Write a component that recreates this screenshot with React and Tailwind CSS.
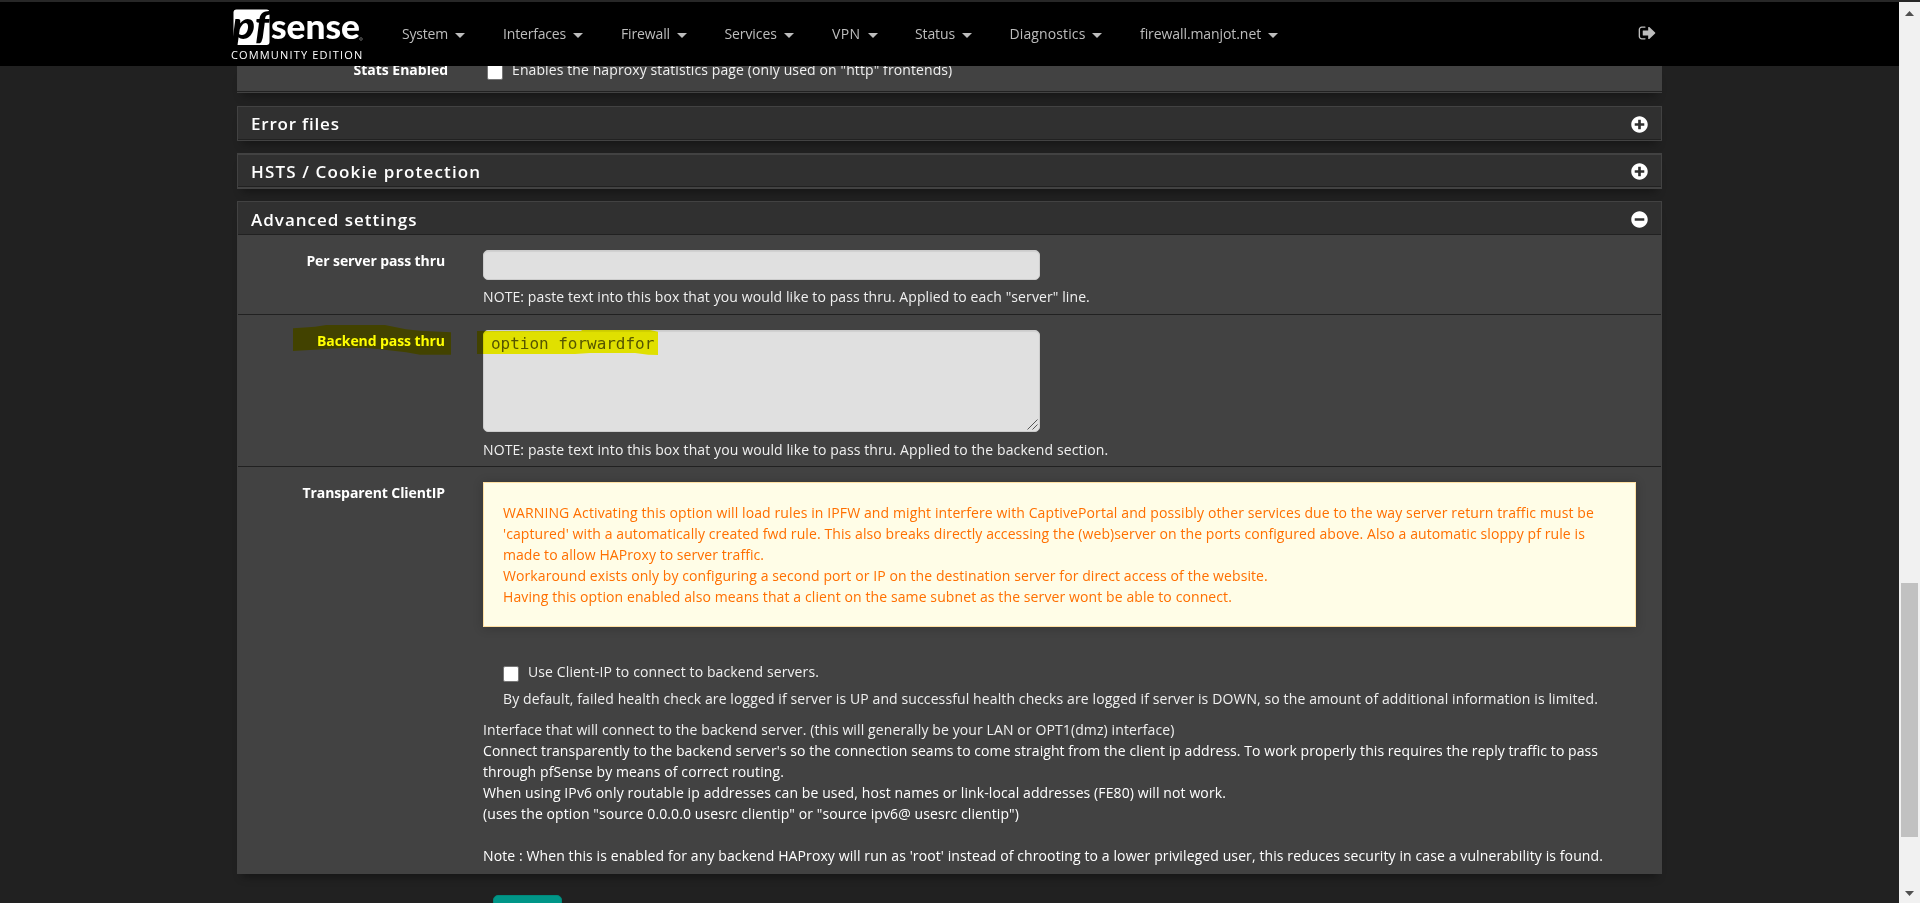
import { FaPlusCircle, FaMinusCircle } from "react-icons/fa";

const NAV = [
  { label: "System", width: "w-[101px]", tracking: "tracking-[-0.2px]" },
  { label: "Interfaces", width: "w-[118px]", tracking: "tracking-[-0.18px]" },
  { label: "Firewall", width: "w-[103.5px]", tracking: "tracking-[-0.13px]" },
  { label: "Services", width: "w-[107.5px]", tracking: "tracking-[-0.1px]" },
  { label: "VPN", width: "w-[83px]", tracking: "tracking-[0.4px]" },
  { label: "Status", width: "w-[94.5px]", tracking: "tracking-[-0.12px]" },
  { label: "Diagnostics", width: "w-[130.5px]", tracking: "tracking-[0.12px]" },
  { label: "firewall.manjot.net", width: "w-[145px]", tracking: "tracking-[-0.08px]" },
];

const WARNING = [
  {
    text: "WARNING Activating this option will load rules in IPFW and might interfere with CaptivePortal and possibly other services due to the way server return traffic must be",
    tracking: "tracking-[0.11px]",
  },
  {
    text: "'captured' with a automatically created fwd rule. This also breaks directly accessing the (web)server on the ports configured above. Also a automatic sloppy pf rule is",
    tracking: "tracking-[0.094px]",
  },
  { text: "made to allow HAProxy to server traffic.", tracking: "tracking-[0.06px]" },
  {
    text: "Workaround exists only by configuring a second port or IP on the destination server for direct access of the website.",
    tracking: "tracking-[0.095px]",
  },
  {
    text: "Having this option enabled also means that a client on the same subnet as the server wont be able to connect.",
    tracking: "tracking-[0.102px]",
  },
];

const HELP = [
  {
    text: "Interface that will connect to the backend server. (this will generally be your LAN or OPT1(dmz) interface)",
    tracking: "tracking-[0.109px]",
    color: "text-[#f0f0f0]",
  },
  {
    text: "Connect transparently to the backend server's so the connection seams to come straight from the client ip address. To work properly this requires the reply traffic to pass",
    tracking: "tracking-[0.061px]",
    color: "text-white",
  },
  { text: "through pfSense by means of correct routing.", tracking: "tracking-[0.112px]", color: "text-white" },
  {
    text: "When using IPv6 only routable ip addresses can be used, host names or link-local addresses (FE80) will not work.",
    tracking: "tracking-[0.104px]",
    color: "text-white",
  },
  {
    text: '(uses the option "source 0.0.0.0 usesrc clientip" or "source ipv6@ usesrc clientip")',
    tracking: "tracking-[0.093px]",
    color: "text-white",
  },
  { text: "\u00a0", tracking: "", color: "" },
  {
    text: "Note : When this is enabled for any backend HAProxy will run as 'root' instead of chrooting to a lower privileged user, this reduces security in case a vulnerability is found.",
    tracking: "tracking-[0.104px]",
    color: "text-white",
  },
];

const PANEL_SHADOW = "shadow-[0_8px_8px_-5px_rgba(0,0,0,0.35)]";

function Logo() {
  return (
    <div className="flex w-[134px] shrink-0 flex-col pt-[6px]">
      <svg width="134" height="38" viewBox="0 0 134 38" className="block overflow-visible">
        <path d="M6.500 1.500h30a3 3 0 0 1 3 3v29.500a3 3 0 0 1-3 3H7.200l-3.700-8V4.500a3 3 0 0 1 3-3z" fill="#fff" />
        <text
          x="2"
          y="30.500"
          fontFamily="Lato, sans-serif"
          fontWeight="900"
          fontStyle="italic"
          fontSize="37"
          textLength="37"
          lengthAdjust="spacingAndGlyphs"
          fill="#000"
        >
          pf
        </text>
        <text
          x="41"
          y="30.500"
          fontFamily="Lato, sans-serif"
          fontWeight="900"
          fontSize="35"
          textLength="89"
          lengthAdjust="spacingAndGlyphs"
          fill="#fff"
        >
          sense
        </text>
        <circle cx="131" cy="31" r="1.3" fill="none" stroke="#777" strokeWidth="0.8" />
      </svg>
      <span className="pl-[1px] text-[11px] leading-[17px] tracking-[1.15px] whitespace-nowrap text-white">COMMUNITY EDITION</span>
    </div>
  );
}

function Navbar() {
  return (
    <header className="flex h-16 w-full shrink-0 bg-black pl-[230px]">
      <Logo />
      <nav className="flex flex-1 pt-[21px] pl-[38px]">
        {NAV.map((item) => (
          <a key={item.label} className={`flex h-[21px] items-center gap-[7px] ${item.width}`}>
            <span className={`text-sm leading-[21px] whitespace-nowrap text-[#bdbdbd] ${item.tracking}`}>{item.label}</span>
            <svg width="10" height="5" viewBox="0 0 10 5" className="mt-[3px] shrink-0">
              <path d="M0 0h10L5 5z" fill="#bdbdbd" />
            </svg>
          </a>
        ))}
      </nav>
      <svg width="19" height="18" viewBox="0 0 1792 1792" preserveAspectRatio="none" className="mt-[22px] mr-[242px] shrink-0">
        <path
          fill="#bdbdbd"
          d="M704 1440q0 4 1 20t.5 26.5-3 23.5-10 19.5-20.5 6.500h-320q-119 0-203.500-84.500t-84.500-203.500v-704q0-119 84.500-203.500t203.500-84.500h320q13 0 22.500 9.500t9.500 22.500q0 4 1 20t.5 26.500-3 23.500-10 19.500-20.500 6.500h-320q-66 0-113 47t-47 113v704q0 66 47 113t113 47h312l11.500 1 11.500 3 8 5.500 7 9 2 13.500zm928-544q0 26-19 45l-544 544q-19 19-45 19t-45-19-19-45v-288h-448q-26 0-45-19t-19-45v-384q0-26 19-45t45-19h448v-288q0-26 19-45t45-19 45 19l544 544q19 19 19 45z"
        />
      </svg>
    </header>
  );
}

function Heading({ title, open, className }) {
  const Icon = open ? FaMinusCircle : FaPlusCircle;
  return (
    <div className={`flex items-center justify-between border-b border-[#212121] bg-[#303030] pr-[13px] pl-[13px] ${className}`}>
      <h2 className="text-[17px] leading-5 font-semibold whitespace-nowrap text-white">{title}</h2>
      <Icon className="size-[17px] text-white" />
    </div>
  );
}

function Label({ children, className }) {
  return <label className={`w-[207px] shrink-0 text-right text-sm leading-[21px] font-bold whitespace-nowrap text-white ${className}`}>{children}</label>;
}

function Checkbox({ className }) {
  return <span className={`size-4 shrink-0 rounded-[2px] border border-[#767676] bg-white ${className}`} />;
}

const FIELD = "w-[557px] rounded-[5px] border border-[#ccc] bg-[#e0e0e0] shadow-[inset_0_1px_1px_rgba(0,0,0,0.075)]";
const NOTE = "text-sm leading-[21px] whitespace-nowrap text-[#f0f0f0]";

function Settings() {
  return (
    <section className={`mt-3 h-[673px] shrink-0 border border-[#424242] bg-[#424242] ${PANEL_SHADOW}`}>
      <Heading title={<span className="tracking-[1px]">Advanced settings</span>} open className="h-[33px] pt-[3px]" />

      <div className="flex h-20 gap-[38px] border-b border-[#212121] pt-[15px]">
        <Label className="tracking-[-0.1px]">Per server pass thru</Label>
        <div>
          <div className={`h-[30px] ${FIELD}`} />
          <p className={`mt-[6px] tracking-[0.1px] ${NOTE}`}>
            NOTE: paste text into this box that you would like to pass thru. Applied to each "server" line.
          </p>
        </div>
      </div>

      <div className="relative flex h-[152px] gap-[38px] border-b border-[#212121] pt-[15px]">
        <Label className="tracking-[-0.084px]">Backend pass thru</Label>
        <div>
          <div className={`flex h-[102px] justify-between ${FIELD}`}>
            <span className="pt-[2px] pl-[7px] font-['DejaVu_Sans_Mono',monospace] text-[16px] leading-[21px] tracking-[-0.03px] text-[#555]">option forwardfor</span>
            <svg width="11" height="11" viewBox="0 0 11 11" className="mr-[1px] mb-[1px] self-end">
              <path d="M0.5 10.5l10-10M5.5 10.5l5-5" stroke="#555" strokeWidth="1" />
            </svg>
          </div>
          <p className={`mt-[7px] tracking-[0.112px] ${NOTE}`}>
            NOTE: paste text into this box that you would like to pass thru. Applied to the backend section.
          </p>
        </div>
        <svg width="366" height="31" viewBox="0 0 366 31" className="pointer-events-none absolute top-[10px] left-[55px] mix-blend-multiply">
          <path fill="#ff0" d="M0 3.3 22 1.7 33 0h59l21 4.3 14 1.4 31 1.6v22.4h-31l-14-2.4-26-3-14-1.3H50l-20 1.3L0 26z" />
          <path fill="#ff0" d="M184 6h104.500V5h68.500l8 1.700V30l-9.700-.3L342 28h-45l-15 1h-98z" />
        </svg>
      </div>

      <div className="flex gap-[38px] pt-[15px]">
        <Label className="tracking-[-0.095px]">Transparent ClientIP</Label>
        <div>
          <div className="h-[145px] w-[1153px] border border-[#ffe0a3] bg-[#fffde7] pt-[19px] pl-[19px] shadow-[0_1px_10px_rgba(0,0,0,0.2)]">
            {WARNING.map((line) => (
              <p key={line.text} className={`text-sm leading-[21px] whitespace-nowrap text-[#ff6f00] ${line.tracking}`}>
                {line.text}
              </p>
            ))}
          </div>
          <div className="mt-[34px] flex h-[21px] items-start pl-5">
            <Checkbox className="mt-[5px]" />
            <span className={`ml-[9px] tracking-[0.113px] ${NOTE}`}>Use Client-IP to connect to backend servers.</span>
          </div>
          <p className={`mt-[6px] pl-5 tracking-[0.109px] ${NOTE}`}>
            By default, failed health check are logged if server is UP and successful health checks are logged if server is DOWN, so the amount of additional information is limited.
          </p>
          <div className="mt-[10px]">
            {HELP.map((line) => (
              <p key={line.text} className={`text-sm leading-[21px] whitespace-nowrap ${line.tracking} ${line.color}`}>
                {line.text}
              </p>
            ))}
          </div>
        </div>
      </div>
    </section>
  );
}

function Scrollbar() {
  return (
    <aside className="flex w-[21px] shrink-0 flex-col items-center bg-[#f1f1f1] pt-[9px]">
      <svg width="9" height="5" viewBox="0 0 9 5">
        <path d="M0 5l4.500-5L9 5z" fill="#505050" />
      </svg>
      <div className="mt-[567px] h-[254px] w-[17px] bg-[#c1c1c1]" />
      <svg width="9" height="5" viewBox="0 0 9 5" className="mt-[54px]">
        <path d="M0 0l4.500 5L9 0z" fill="#505050" />
      </svg>
    </aside>
  );
}

export default function App() {
  return (
    <div className="flex h-[903px] w-[1920px] flex-col overflow-hidden bg-[#212121] font-['Open_Sans','Noto_Sans',sans-serif]">
      <div className="h-[2px] shrink-0 bg-[#272727]" />
      <div className="flex min-h-0 flex-1">
        <div className="flex w-[1899px] shrink-0 flex-col">
          <Navbar />
          <main className="flex min-h-0 w-full flex-1 flex-col overflow-hidden pr-[237px] pl-[237px]">
            <section className={`h-[27px] shrink-0 border-b border-[#424242] ${PANEL_SHADOW}`}>
              <div className="h-[26px] overflow-hidden border-b border-[#212121] bg-[#424242]">
                <div className="-mt-[7px] flex">
                  <Label className="ml-1 tracking-[-0.014px]">Stats Enabled</Label>
                  <Checkbox className="mt-[5px] ml-[39px]" />
                  <span className={`ml-[9px] tracking-[0.1px] ${NOTE}`}>
                    Enables the haproxy statistics page (only used on "http" frontends)
                  </span>
                </div>
              </div>
            </section>

            <section className={`mt-[13px] shrink-0 border border-[#424242] ${PANEL_SHADOW}`}>
              <Heading title={<span className="tracking-[0.8px]">Error files</span>} className="h-[33px] pt-[2px]" />
            </section>

            <section className={`mt-3 shrink-0 border-x border-y-2 border-[#424242] ${PANEL_SHADOW}`}>
              <Heading title={<span className="tracking-[1.15px]">HSTS / Cookie protection</span>} className="h-8 pt-[2px]" />
            </section>

            <Settings />

            <div className="mt-[21px] ml-64 h-[34px] w-[69px] shrink-0 rounded-[5px] border border-[#00897b] bg-[#009688]" />
          </main>
        </div>
        <Scrollbar />
      </div>
    </div>
  );
}
